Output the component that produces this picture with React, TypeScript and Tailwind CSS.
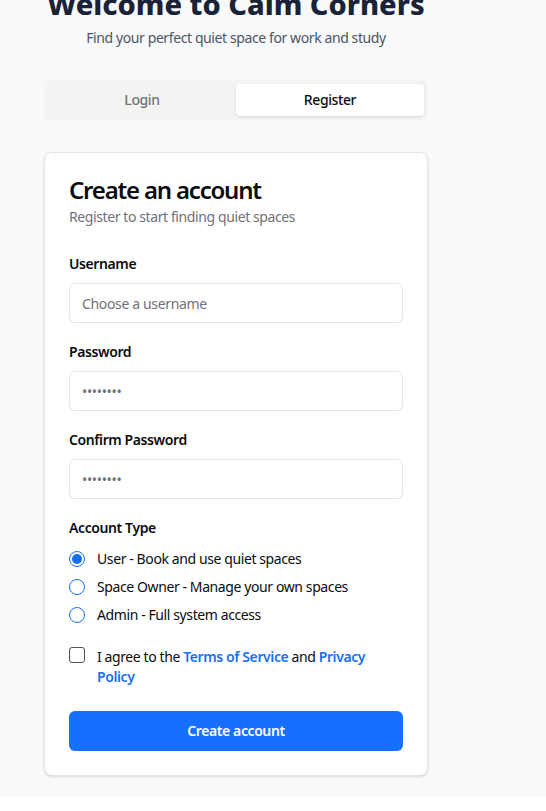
import * as React from "react";

const ROLES = [
  { value: "user", label: "User - Book and use quiet spaces" },
  { value: "owner", label: "Space Owner - Manage your own spaces" },
  { value: "admin", label: "Admin - Full system access" },
];

export default function App() {
  const [role, setRole] = React.useState("user");
  const [agree, setAgree] = React.useState(false);

  return (
    <div className="min-h-screen bg-[#f8f9fb] font-['Noto_Sans',sans-serif] tracking-[-0.025em] text-[#0b0b0f]">
      <div className="ml-[44px] w-[384px]">
        {/* Header */}
        <div className="-mt-[14px] text-center">
          <h1 className="text-[29px] leading-9 font-extrabold tracking-normal text-[#1a2238] whitespace-nowrap">
            Welcome to Calm Corners
          </h1>
          <p className="mt-1.5 text-sm leading-5 text-[#4b5563]">
            Find your perfect quiet space for work and study
          </p>
        </div>

        {/* Tabs */}
        <div className="mt-8 grid grid-cols-2 rounded-md bg-[#f3f3f1] p-1">
          <button className="h-8 rounded-sm text-sm font-medium text-[#71717a]">
            Login
          </button>
          <button className="h-8 rounded-sm bg-white text-sm font-medium text-[#0b0b0f] shadow-sm">
            Register
          </button>
        </div>

        {/* Card */}
        <div className="mt-8 rounded-lg border border-[#e4e4e7] bg-white px-6 pt-[23px] pb-6 shadow-sm">
          <h2 className="text-2xl leading-7 font-semibold tracking-[-0.05em]">
            Create an account
          </h2>
          <p className="mt-[3px] text-sm leading-5 text-[#71717a]">
            Register to start finding quiet spaces
          </p>

          <div className="mt-[27px] flex flex-col gap-[19px]">
            <Field label="Username" placeholder="Choose a username" />
            <Field label="Password" placeholder="••••••••" type="password" />
            <Field label="Confirm Password" placeholder="••••••••" type="password" />

            <div>
              <p className="text-sm leading-5 font-semibold">Account Type</p>
              <div className="mt-[11px] flex flex-col gap-2">
                {ROLES.map((r) => (
                  <label key={r.value} className="flex items-center gap-3 text-sm leading-5">
                    <span
                      onClick={() => setRole(r.value)}
                      className="flex size-4 items-center justify-center rounded-full border border-[#1570ef]"
                    >
                      {role === r.value && (
                        <span className="size-2.5 rounded-full bg-[#1570ef]" />
                      )}
                    </span>
                    {r.label}
                  </label>
                ))}
              </div>
            </div>

            <div className="mt-[3px] flex items-start gap-3 text-sm leading-5">
              <span
                onClick={() => setAgree(!agree)}
                className="size-4 shrink-0 rounded-[3px] border border-[#52525b] bg-white"
              />
              <p className="max-w-[276px]">
                I agree to the{" "}
                <a className="font-semibold text-[#1a6ff2]">Terms of Service</a> and{" "}
                <a className="font-semibold text-[#1a6ff2]">Privacy Policy</a>
              </p>
            </div>
          </div>

          <button className="mt-6 h-10 w-full rounded-md bg-[#1570ff] text-sm font-semibold text-white">
            Create account
          </button>
        </div>
      </div>
    </div>
  );
}

function Field({
  label,
  placeholder,
  type = "text",
}: {
  label: string;
  placeholder: string;
  type?: string;
}) {
  return (
    <div>
      <label className="block text-sm leading-5 font-semibold">{label}</label>
      <input
        type={type}
        placeholder={placeholder}
        className="mt-[9px] h-10 w-full rounded-md border border-[#e4e4e7] bg-white px-3 text-sm tracking-[-0.025em] placeholder:text-[#71717a] outline-none"
      />
    </div>
  );
}
